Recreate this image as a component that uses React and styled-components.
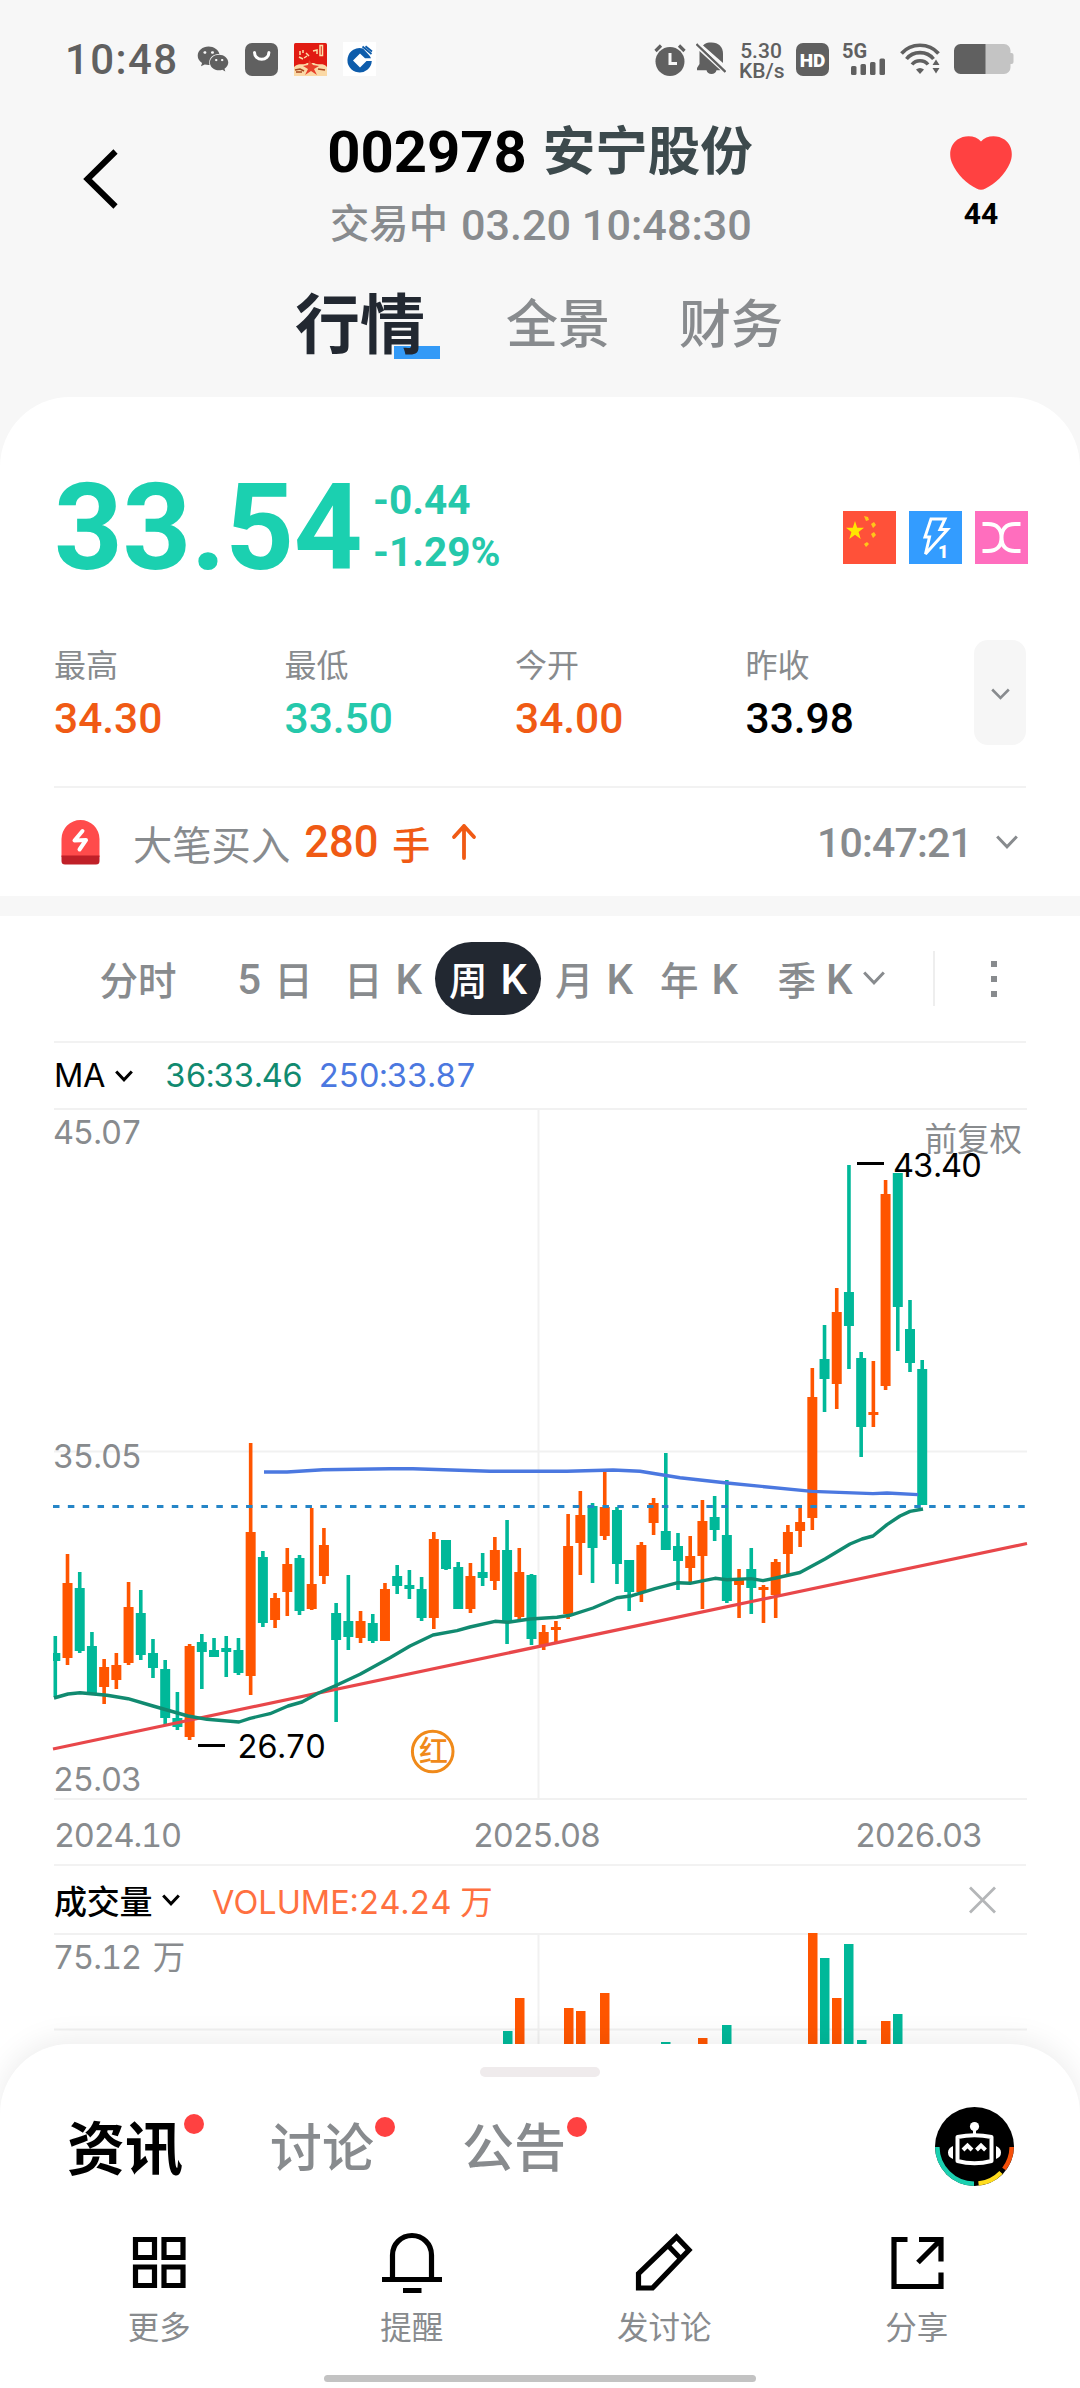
import React from "react";
import styled, { createGlobalStyle } from "styled-components";
import { FaWeixin } from "react-icons/fa";

const UP = "#ff5500";
const DOWN = "#00b899";
const GRAY = "#888b8e";

const GlobalStyle = createGlobalStyle`
  body {
    margin: 0;
    background: #f7f7f7;
    font-family: Roboto, "Noto Sans CJK SC", sans-serif;
  }
  * {
    box-sizing: border-box;
  }
  svg {
    display: block;
    flex: none;
  }
`;

const Page = styled.div`
  position: relative;
  width: 1080px;
  height: 2388px;
  overflow: hidden;
  background: #f7f7f7;
  white-space: nowrap;
`;

/* ---------- status bar ---------- */

const StatusBar = styled.div`
  display: flex;
  align-items: center;
  height: 118px;
  padding: 0 66px 0 65px;
  color: #606060;
`;

const Clock = styled.span`
  width: 132px;
  font-size: 42px;
  font-weight: 500;
  letter-spacing: 1.4px;
`;

const StatusLeft = styled.div`
  display: flex;
  align-items: center;
  gap: 16px;
  flex: 1;
`;

const StatusRight = styled.div`
  display: flex;
  align-items: center;
`;

const NetSpeed = styled.div`
  width: 44px;
  margin: 3px 13px 0;
  font-size: 21px;
  line-height: 20px;
  font-weight: 500;
  text-align: center;
`;

const Gap = styled.div`
  width: ${(p) => p.$w}px;
`;

/* ---------- header ---------- */

const Header = styled.header`
  display: grid;
  grid-template-columns: 200px 1fr 198px;
  height: 139px;
`;

const BackButton = styled.div`
  padding: 31px 0 0 83px;
`;

const Titles = styled.div`
  display: flex;
  flex-direction: column;
  align-items: center;
`;

const Title = styled.h1`
  margin: 1px 0 0 -2px;
  display: flex;
  gap: 16px;
  align-items: center;
  font-size: 58px;
  line-height: 67px;
  font-weight: 700;
  color: #000;
`;

const StockName = styled.span`
  font-size: 52.5px;
  color: #3d4a4d;
`;

const SubTitle = styled.div`
  display: flex;
  gap: 13px;
  margin-top: 6px;
  font-size: 43.2px;
  line-height: 67px;
  font-weight: 500;
  color: ${GRAY};
`;

const Cjk = styled.span`
  font-size: ${(p) => p.$size}px;
  font-weight: ${(p) => p.$weight || "inherit"};
`;

const Favorite = styled.div`
  display: flex;
  flex-direction: column;
  align-items: center;
  padding-top: 18px;
  font-size: 30px;
  line-height: 30px;
  font-weight: 700;
  gap: 9px;
`;

const MainTabs = styled.nav`
  display: flex;
  align-items: center;
  height: 140px;
  padding: 0 0 2px 295px;
`;

const MainTab = styled.span`
  position: relative;
  z-index: 0;
  margin-right: ${(p) => p.$gap || 0}px;
  font-size: ${(p) => (p.$active ? 65 : 52)}px;
  font-weight: ${(p) => (p.$active ? 700 : 500)};
  line-height: 80px;
  color: ${(p) => (p.$active ? "#222831" : GRAY)};
  &::after {
    content: "";
    display: ${(p) => (p.$active ? "block" : "none")};
    position: absolute;
    z-index: -1;
    left: 99px;
    bottom: 7px;
    width: 46px;
    height: 13px;
    background: #339af7;
  }
`;

/* ---------- quote card ---------- */

const Card = styled.main`
  height: 1991px;
  padding-top: 76px;
  background: #fff;
  border-radius: 70px 70px 0 0;
`;

const PriceRow = styled.div`
  display: flex;
  align-items: center;
  height: 110px;
  padding: 0 52px 0 54px;
`;

const Price = styled.div`
  width: 319px;
  font-size: 120px;
  line-height: 110px;
  font-weight: 700;
  letter-spacing: -0.4px;
  color: #1bd0b0;
`;

const Changes = styled.div`
  flex: 1;
  padding-bottom: 4px;
  font-size: 40.5px;
  line-height: 52px;
  font-weight: 700;
  color: #25c8ab;
`;

const Badges = styled.div`
  display: flex;
  gap: 13px;
  padding-top: 19px;
`;

const Stats = styled.div`
  display: grid;
  grid-template-columns: repeat(4, 230.5px) 1fr;
  height: 105px;
  margin: 57px 54px 41px;
`;

const StatLabel = styled.div`
  font-size: 32px;
  line-height: 53px;
  color: ${GRAY};
`;

const StatValue = styled.div`
  font-size: 42.5px;
  line-height: 52px;
  font-weight: 500;
  color: ${(p) => p.$color};
`;

const Expand = styled.div`
  display: flex;
  align-items: center;
  justify-content: center;
  width: 52px;
  height: 105px;
  padding-top: 2px;
  margin-left: -2px;
  background: #f6f6f6;
  border-radius: 14px;
`;

const Divider = styled.div`
  height: 2px;
  margin: 0 54px;
  background: #f2f2f2;
`;

const AlertRow = styled.div`
  display: flex;
  align-items: center;
  height: 108px;
  padding: 0 62px 0 61px;
  font-size: 43.5px;
  color: ${GRAY};
`;

const AlertText = styled.div`
  display: flex;
  align-items: center;
  gap: 14px;
  flex: 1;
  padding-left: 33px;
`;

const AlertAmount = styled.span`
  color: #f05a14;
  font-weight: 500;
`;

const AlertTime = styled.span`
  margin: 2px 24px 0 0;
  font-size: 41px;
  font-weight: 500;
  letter-spacing: -0.8px;
`;

const Band = styled.div`
  height: 20px;
  background: #f7f7f7;
`;

/* ---------- chart ---------- */

const Periods = styled.div`
  display: flex;
  align-items: center;
  height: 125px;
  padding: 0 54px 0 53px;
`;

const Period = styled.div`
  display: flex;
  align-items: center;
  justify-content: center;
  gap: ${(p) => (p.$more ? 10 : 13)}px;
  width: ${(p) => p.$w}px;
  height: 73px;
  margin-left: ${(p) => p.$ml || 0}px;
  padding-bottom: 2px;
  border-radius: 37px;
  font-size: 42px;
  font-weight: 500;
  color: ${(p) => (p.$active ? "#fff" : GRAY)};
  background: ${(p) => (p.$active ? "#222831" : "transparent")};
`;

const PeriodLetter = styled.span`
  padding-top: 4px;
`;

const PeriodSplit = styled.div`
  width: 2px;
  height: 55px;
  margin-left: 22px;
  background: #eee;
`;

const Dots = styled.div`
  display: grid;
  gap: 9px;
  margin-left: 56px;
  span {
    width: 6px;
    height: 6px;
    background: ${GRAY};
  }
`;

const IndicatorRow = styled.div`
  display: flex;
  align-items: center;
  height: ${(p) => p.$h}px;
  margin: 0 54px;
  font-family: Inter, "Noto Sans CJK SC", sans-serif;
  font-size: 32.5px;
  font-variant-numeric: tabular-nums;
  letter-spacing: -0.3px;
  color: #000;
`;

const IndicatorValue = styled.span`
  margin-left: ${(p) => p.$ml}px;
  letter-spacing: ${(p) => p.$ls}px;
  color: ${(p) => p.$color};
`;

const Spacer = styled.div`
  flex: 1;
`;

const ChartBox = styled.div`
  margin: 0 54px;
  svg {
    overflow: visible;
  }
  text {
    font-family: Inter, "Noto Sans CJK SC", sans-serif;
    font-size: 32.5px;
    font-variant-numeric: tabular-nums;
    letter-spacing: -1px;
    word-spacing: 4px;
  }
`;

const Axis = styled.div`
  display: grid;
  grid-template-columns: 419px 382px 1fr;
  height: 64px;
  margin: 0 54px;
  font-family: Inter, sans-serif;
  font-size: 32.5px;
  font-variant-numeric: tabular-nums;
  line-height: 71px;
  letter-spacing: -1.2px;
  color: ${GRAY};
`;

/* ---------- bottom sheet ---------- */

const Sheet = styled.footer`
  position: absolute;
  left: 0;
  bottom: 0;
  width: 1080px;
  height: 344px;
  background: #fff;
  border-radius: 70px 70px 0 0;
  box-shadow: 0 -4px 30px rgba(0, 0, 0, 0.08);
`;

const Handle = styled.div`
  width: 120px;
  height: 10px;
  margin: 23px auto 0;
  border-radius: 5px;
  background: #efebec;
`;

const SheetTabs = styled.div`
  display: flex;
  align-items: center;
  height: 139px;
  padding: 0 66px 0 67px;
`;

const SheetTab = styled.span`
  position: relative;
  margin: 7px ${(p) => p.$gap || 0}px 0 0;
  font-size: ${(p) => (p.$active ? 58 : 52)}px;
  line-height: 72px;
  font-weight: ${(p) => (p.$active ? 700 : 500)};
  color: ${(p) => (p.$active ? "#000" : GRAY)};
  &::after {
    content: "";
    position: absolute;
    top: ${(p) => (p.$active ? 0 : 3)}px;
    right: -21px;
    width: 20px;
    height: 20px;
    border-radius: 50%;
    background: #ff4141;
  }
`;

const Actions = styled.div`
  display: grid;
  grid-template-columns: repeat(4, 252.5px);
  padding: 15px 0 0 33px;
`;

const Action = styled.div`
  display: flex;
  flex-direction: column;
  align-items: center;
  gap: 12px;
  font-size: 31.5px;
  line-height: 44px;
  color: ${GRAY};
`;

const HomeBar = styled.div`
  width: 432px;
  height: 7px;
  margin: 24px auto 0;
  border-radius: 4px;
  background: #c3c3c3;
`;

/* ---------- data ---------- */

// [rising, high, body top, body bottom, low]
const candles = [
  [0, 528, 545, 553, 589], [1, 446, 475, 550, 557], [0, 464, 480, 543, 545],
  [0, 524, 538, 585, 586], [1, 551, 559, 579, 596], [1, 545, 557, 572, 581],
  [1, 474, 499, 555, 557], [0, 482, 505, 547, 552], [0, 531, 545, 560, 570],
  [0, 552, 561, 610, 617], [0, 584, 610, 619, 622], [1, 536, 538, 629, 632],
  [0, 526, 534, 544, 581], [0, 530, 542, 549, 549], [0, 528, 540, 544, 569],
  [0, 530, 542, 565, 567], [1, 335, 424, 568, 587], [0, 443, 449, 515, 519],
  [1, 485, 490, 512, 520], [1, 440, 456, 484, 508], [0, 447, 450, 503, 507],
  [1, 400, 476, 501, 502], [1, 420, 437, 468, 476], [0, 495, 505, 532, 614],
  [0, 467, 513, 529, 542], [1, 503, 513, 530, 535], [0, 506, 515, 533, 535],
  [1, 475, 481, 533, 533], [0, 457, 468, 478, 486], [0, 462, 477, 481, 491],
  [0, 469, 481, 510, 513], [1, 424, 431, 510, 521], [0, 432, 432, 461, 462],
  [0, 454, 459, 501, 501], [1, 455, 468, 501, 505], [0, 445, 464, 470, 478],
  [1, 429, 442, 473, 482], [0, 412, 442, 514, 536], [1, 440, 464, 509, 512],
  [0, 466, 467, 531, 537], [1, 517, 524, 537, 542], [1, 513, 519, 522, 534],
  [1, 406, 438, 506, 511], [1, 383, 407, 435, 467], [0, 395, 398, 440, 475],
  [1, 364, 399, 428, 432], [0, 399, 402, 456, 476], [0, 452, 452, 484, 503],
  [1, 434, 437, 484, 494], [1, 390, 395, 415, 427], [0, 345, 423, 442, 442],
  [0, 425, 438, 453, 482], [1, 428, 448, 460, 474], [1, 392, 413, 448, 501],
  [0, 388, 409, 422, 433], [0, 372, 427, 493, 495], [1, 461, 472, 477, 510],
  [0, 440, 461, 480, 506], [1, 477, 479, 482, 515], [1, 451, 454, 487, 510],
  [1, 417, 424, 446, 467], [1, 399, 414, 423, 439], [1, 260, 289, 410, 422],
  [0, 217, 251, 271, 304], [1, 180, 204, 276, 301], [0, 57, 184, 218, 261],
  [0, 244, 250, 319, 349], [1, 253, 304, 307, 319], [1, 72, 86, 278, 282],
  [0, 65, 65, 199, 243], [0, 192, 221, 255, 264], [0, 252, 261, 397, 397],
];

const ma36 =
  "0,590 14,586 26,584.7 53,587.3 74,590.7 99,598 134,608 153,611.3 185,614 196,610.3 216,605.7 234,598 248,594 264,585.3 283,577 306,566.3 336,549.7 356,538 379,527 403,522.7 416,519 441,513.3 454,514.3 476,511 503,509.3 516,507.3 539,500 563,489.7 578,487.7 601,480.7 624,474.7 636,475.3 661,470.3 673,471.7 697,470.6 709,472.7 722,470 746,464.5 771,451 796,436 808,431 819,428 833,416.6 846,408 856,403.4 869,401";
const ma250 =
  "210,364 233,364 269,361.7 336,360.7 359,360.7 436,363.2 513,363.2 559,362 586,363.3 626,369.7 673,375 758,383.4 819,385.6 833,385 864,386.6";

// [x, top, rising]
const volumes = [
  [449, 98, 0], [461, 65, 1], [510, 75, 1], [522, 78, 1], [546, 60, 1],
  [607, 109, 0], [644, 105, 1], [668, 92, 0], [754, 0, 1], [766, 25, 0],
  [778, 65, 1], [790, 11, 0], [803, 107, 0], [827, 88, 1], [839, 81, 0],
];

const stats = [
  ["最高", "34.30", "#f05a14"],
  ["最低", "33.50", "#25c8ab"],
  ["今开", "34.00", "#f05a14"],
  ["昨收", "33.98", "#000"],
];

/* ---------- icons ---------- */

const Chevron = ({ w, h, color, stroke = 3 }) => (
  <svg width={w} height={h} viewBox={`0 0 ${w} ${h}`} fill="none" stroke={color} strokeWidth={stroke}>
    <path d={`M1.2 1.5 L${w / 2} ${h - 2.2} L${w - 1.2} 1.5`} />
  </svg>
);

const BagIcon = () => (
  <svg width="33" height="33" viewBox="0 0 33 33">
    <rect width="33" height="33" rx="7" fill="#606060" />
    <path d="M9.500 9.500 a7.200 6.800 0 0 0 14.400 0" fill="none" stroke="#fff" strokeWidth="3" strokeLinecap="round" />
  </svg>
);

const RedAppIcon = () => (
  <svg width="33" height="33" viewBox="0 0 33 33">
    <rect width="33" height="33" rx="1.500" fill="#e11b12" />
    <path d="M0 24 C5 19 9 23 13 20 L20 20 C25 23 29 19 33 24 V33 H0Z" fill="#fbd9a6" />
    <path d="M26 2.500 h2.500 v10 h-2.500z M19 8 l4-1 v4 M12 10 l3 3 M5 14 l4 2 M10 15 l3-2 M6 8v4 M9 7v3" fill="none" stroke="#fde0a8" strokeWidth="1.500" />
    <path d="M15 17 l4 5 6 1 -5 3 3 6 -6-4 -6 4 3-6 -5-3 5-1z" fill="#e8402a" />
    <path d="M1 27 l5-1 4 2 M24 26 l7 1 M2 29h6" stroke="#a8471e" strokeWidth="1.600" fill="none" />
  </svg>
);

const BankIcon = () => (
  <svg width="33" height="34" viewBox="0 0 33 34">
    <rect width="33" height="34" fill="#fff" />
    <path d="M20 6.500 A12.200 12.200 0 1 0 28.800 19 H23.500 L17 25.500 L10 18.500 L17 11.500 L22 16.200 H28 A12 12 0 0 0 26 13Z" fill="#0d5cab" />
    <path d="M19.500 4.500 L28.500 12 M22.500 4.300 L29 9.500" stroke="#0d5cab" strokeWidth="1.800" />
  </svg>
);

const AlarmIcon = () => (
  <svg width="32" height="33" viewBox="0 0 32 33">
    <circle cx="16" cy="18.500" r="14.500" fill="#606060" />
    <path d="M1.500 8 L7 2.500 M30.500 8 L25 2.500" stroke="#606060" strokeWidth="3.200" />
    <path d="M16 10 V20.500 H23" fill="none" stroke="#f7f7f7" strokeWidth="3" />
  </svg>
);

const MuteIcon = () => (
  <svg width="30" height="34" viewBox="0 0 30 34">
    <path d="M7 3.500 C9 1 12 0.500 15.500 0.500 C22.500 0.500 27 5 27 11.500 V21 L7 3.500Z" fill="#606060" />
    <path d="M3.500 9 L24.500 28.300 H20.500 A5.200 5.200 0 0 1 10.500 28.300 H1 V26 L3.500 22Z" fill="#606060" />
    <path d="M0.500 2 L29.500 30" stroke="#606060" strokeWidth="2.400" />
    <path d="M3 1.500 L30 26.500" stroke="#f7f7f7" strokeWidth="2" />
  </svg>
);

const HdIcon = () => (
  <svg width="33" height="33" viewBox="0 0 33 33">
    <rect width="33" height="33" rx="7" fill="#606060" />
    <text x="16.500" y="23.500" textAnchor="middle" fontSize="19" fontWeight="900" fill="#fff">HD</text>
  </svg>
);

const SignalIcon = () => (
  <svg width="46" height="40" viewBox="0 -5 46 40" fill="#606060">
    <text x="1" y="14" fontSize="20" fontWeight="700">5G</text>
    <rect x="10" y="22" width="5.500" height="9" rx="1.500" />
    <rect x="19.500" y="20" width="5.500" height="11" rx="1.500" />
    <rect x="29" y="18" width="5.500" height="13" rx="1.500" />
    <rect x="38.500" y="14.500" width="5.500" height="16.500" rx="1.500" />
  </svg>
);

const WifiIcon = () => (
  <svg width="41" height="32" viewBox="0 0 41 32">
    <g fill="none" stroke="#606060" strokeWidth="3.600">
      <path d="M1.500 10.500 C11 -0.500 29 -0.500 38.500 10.500" />
      <path d="M6.500 16 C13 7.500 27 7.500 33.500 16" />
      <path d="M12 21.500 C16 16.500 24 16.500 28 21.500" />
    </g>
    <path d="M16 26.500 C18.500 24.500 21.500 24.500 24 26.500 L20 31Z" fill="#606060" />
    <path d="M32.500 22 L36 16.500 L39.500 22Z M32.500 25 L36 30.500 L39.500 25Z" fill="#606060" />
  </svg>
);

const BatteryIcon = () => (
  <svg width="60" height="30" viewBox="0 0 60 30">
    <path d="M6 0 H50 a6.500 6.500 0 0 1 6.500 6.500 V9 h1 a2 2 0 0 1 2 2 V18 a2 2 0 0 1 -2 2 h-1 V23.500 A6.500 6.500 0 0 1 50 30 H6Z" fill="#c4c4c4" />
    <path d="M31.500 0 V30 H6.500 A6.500 6.500 0 0 1 0 23.500 V6.500 A6.500 6.500 0 0 1 6.500 0Z" fill="#606060" />
  </svg>
);

const HeartIcon = () => (
  <svg width="62" height="54" viewBox="0 0 62 54">
    <path d="M31 5.500 C26 -1 14.500 -1.500 7.500 3.500 C0 9 -1.500 18.500 2 27 C7 38.500 17 48 26.500 52.500 Q31 55 35.500 52.500 C45 48 55 38.500 60 27 C63.500 18.500 62 9 54.500 3.500 C47.500 -1.500 36 -1 31 5.500Z" fill="#ff4141" />
  </svg>
);

const FlagIcon = () => (
  <svg width="53" height="53" viewBox="0 0 53 53">
    <rect width="53" height="53" fill="#ff5139" />
    <path d="M12 10 L14.200 16.800 H21 L15.600 21 L17.700 28 L12 23.700 L6.300 28 L8.400 21 L3 16.800 H9.800Z" fill="#ffe600" />
    <g fill="#ffc61a">
      <path d="M21 5 l4 1 1 3 -3 1z M28 13 l3-2 2 3 -3 3z M28 23 l3-2 2 3 -3 3z M21 33 l3-2 2 2 -3 3z" />
    </g>
  </svg>
);

const FlashIcon = () => (
  <svg width="53" height="53" viewBox="0 0 53 53">
    <rect width="53" height="53" fill="#339cff" />
    <path d="M22 8 H36 L31 18.500 H38.500 L16.500 43 L20.500 26 H16 Z" fill="none" stroke="#fff" strokeWidth="3" />
    <text x="29" y="46.500" fontSize="18" fontWeight="900" fill="#fff">1</text>
  </svg>
);

const LinkIcon = () => (
  <svg width="53" height="53" viewBox="0 0 53 53">
    <rect width="53" height="53" fill="#ff6ebe" />
    <path d="M7.500 13 H13 C22 13 26.500 18 26.500 26.500 C26.500 35 22 40 13 40 H7.500 M45.500 13 H40 C31 13 26.500 18 26.500 26.500 C26.500 35 31 40 40 40 H45.500" fill="none" stroke="#fff" strokeWidth="4" />
  </svg>
);

const SirenIcon = () => (
  <svg width="39" height="45" viewBox="0 0 39 45">
    <path d="M0.500 37 V19 a19 19 0 0 1 38 0 V37Z" fill="#ff4b4b" />
    <path d="M0.500 35.500 H38.500 V41 a3.500 3.500 0 0 1 -3.500 3.500 H4 a3.500 3.500 0 0 1 -3.500 -3.500Z" fill="#c02028" />
    <path d="M21.500 11 L13.500 20.500 L25 20 L18.500 29.500" fill="none" stroke="#fff" strokeWidth="4" strokeLinecap="round" strokeLinejoin="round" />
  </svg>
);

const ArrowUp = () => (
  <svg width="33" height="38" viewBox="-7 0 33 38" fill="none" stroke="#f05a14" strokeWidth="3.800" strokeLinecap="round" strokeLinejoin="round">
    <path d="M13 35 V3 M3 14 L13 3 L23 14" />
  </svg>
);

const RobotIcon = () => (
  <svg width="79" height="79" viewBox="0 0 79 79">
    <circle cx="39.500" cy="39.500" r="39.500" fill="#000" />
    <g fill="none" strokeWidth="4.500">
      <path d="M2.300 40 A37.200 37.200 0 0 0 39 76.700" stroke="#1bd0b0" />
      <path d="M43.500 76.600 A37.200 37.200 0 0 0 66 65.500" stroke="#ffdc1e" />
      <path d="M69 62 A37.200 37.200 0 0 0 76.700 40" stroke="#f4500a" />
    </g>
    <circle cx="39.500" cy="19.500" r="4.600" fill="#fff" />
    <g fill="none" stroke="#fff" strokeWidth="4">
      <path d="M39.500 22 V29" strokeWidth="3" />
      <path d="M22.500 30 Q39.500 26.500 56.500 30 V54 Q39.500 58.500 22.500 54Z" strokeLinejoin="round" />
      <path d="M28 43 L32.500 38.500 L37 43 M41.500 43 L46 38.500 L50.500 43" />
    </g>
    <path d="M18 39 V52 Q13 50 13 45.500 Q13 41 18 39Z M61 39 V52 Q66 50 66 45.500 Q66 41 61 39Z" fill="#fff" />
  </svg>
);

const GridIcon = () => (
  <svg width="64" height="64" viewBox="0 0 64 64" fill="none" stroke="#000" strokeWidth="5.200">
    <path d="M8.500 8.500 H27.500 V26.500 H8.500Z M37 8.500 H56 V26.500 H37Z M8.500 36 H27.500 V54.500 H8.500Z M37 36 H56 V54.500 H37Z" />
  </svg>
);

const BellIcon = () => (
  <svg width="64" height="64" viewBox="0 0 64 64" fill="none" stroke="#000" strokeWidth="5.200">
    <path d="M12.500 48 V24 a19.500 19.500 0 0 1 39 0 V48 M2 48.500 H62 M23 59.500 H41.500" />
  </svg>
);

const PencilIcon = () => (
  <svg width="64" height="64" viewBox="0 0 64 64" fill="none" stroke="#000" strokeWidth="5.200">
    <path d="M6.500 57 V42.500 L44.500 6 L57 19 L20.500 57Z M36 14.500 L48.500 27.500" />
  </svg>
);

const ShareIcon = () => (
  <svg width="64" height="64" viewBox="0 0 64 64" fill="none" stroke="#000" strokeWidth="5.200">
    <path d="M22.500 8.500 H9 V55.500 H56 V41.500 M34 8.500 H56 V30.500 M55 9.500 L33 31.500" />
  </svg>
);

const actions = [
  ["更多", GridIcon],
  ["提醒", BellIcon],
  ["发讨论", PencilIcon],
  ["分享", ShareIcon],
];

const periods = [
  { cjk: "分时", w: 170 },
  { num: "5", cjk: "日", w: 104 },
  { cjk: "日", k: true, w: 104, ml: 4 },
  { cjk: "周", k: true, w: 106, active: true },
  { cjk: "月", k: true, w: 106 },
  { cjk: "年", k: true, w: 104 },
  { cjk: "季", k: true, w: 160, more: true },
];

const KChart = () => (
  <svg width="973" height="692" viewBox="0 0 973 692">
    <path d="M0 1 H973 M0 343.500 H973 M0 691 H973 M484.500 1 V691" stroke="#f1f1f1" strokeWidth="2" fill="none" />
    <g fill={GRAY}>
      <text x="-1" y="36">45.07</text>
      <text x="-1" y="360">35.05</text>
      <text x="-1" y="683">25.03</text>
      <text x="968" y="43" textAnchor="end" style={{ letterSpacing: 0 }}>前复权</text>
    </g>
    {candles.map(([up, hi, top, bot, lo], i) => {
      const x = 1.3 + i * 12.21;
      const left = Math.max(x - 5, -1);
      return (
        <g key={i} fill={up ? UP : DOWN}>
          <rect x={x - 1.8} y={hi} width="3.600" height={lo - hi} />
          <rect x={left} y={top} width={x + 5 - left} height={bot - top} />
        </g>
      );
    })}
    <path d="M-1 398.500 H973" stroke="#2585c7" strokeWidth="3" strokeDasharray="6.500 8.350" />
    <path d="M-1 641 L973 435.500" stroke="#e8474a" strokeWidth="3.200" />
    <g fill="none" strokeWidth="3.400" strokeLinejoin="round">
      <polyline points={ma36} stroke="#118a70" />
      <polyline points={ma250} stroke="#4b78e0" />
    </g>
    <path d="M803 55.500 H830 M144 637.500 H171" stroke="#000" strokeWidth="3" />
    <text x="839" y="69">43.40</text>
    <text x="183" y="650">26.70</text>
    <circle cx="378.700" cy="643.500" r="20.300" fill="none" stroke="#f08a1a" strokeWidth="3" />
    <text x="379" y="654" textAnchor="middle" fill="#f08a1a" style={{ fontSize: 29, fontWeight: 500 }}>红</text>
  </svg>
);

const VolumeChart = () => (
  <svg width="973" height="130" viewBox="0 0 973 130">
    <path d="M0 1 H973 M0 96.500 H973 M484.500 1 V130" stroke="#f1f1f1" strokeWidth="2" fill="none" />
    <text x="-1" y="36" fill={GRAY}>75.12 万</text>
    {volumes.map(([x, top, up]) => (
      <rect key={x} x={x} y={top} width="9.500" height={130 - top} fill={up ? UP : DOWN} />
    ))}
  </svg>
);

const App = () => {
  return (
    <Page>
      <GlobalStyle />
      <StatusBar>
        <Clock>10:48</Clock>
        <StatusLeft>
          <FaWeixin size={32} />
          <BagIcon />
          <RedAppIcon />
          <BankIcon />
        </StatusLeft>
        <StatusRight>
          <AlarmIcon />
          <Gap $w={10} />
          <MuteIcon />
          <NetSpeed>
            <div>5.30</div>
            <div>KB/s</div>
          </NetSpeed>
          <HdIcon />
          <Gap $w={12} />
          <SignalIcon />
          <Gap $w={13} />
          <WifiIcon />
          <Gap $w={13} />
          <BatteryIcon />
        </StatusRight>
      </StatusBar>

      <Header>
        <BackButton>
          <svg width="36" height="60" viewBox="0 0 36 60" fill="none" stroke="#000" strokeWidth="6">
            <path d="M32.500 2.500 L4.500 30 L32.500 57.500" />
          </svg>
        </BackButton>
        <Titles>
          <Title>
            002978 <StockName>安宁股份</StockName>
          </Title>
          <SubTitle>
            <Cjk $size={39.3}>交易中</Cjk>
            <span>03.20 10:48:30</span>
          </SubTitle>
        </Titles>
        <Favorite>
          <HeartIcon />
          44
        </Favorite>
      </Header>

      <MainTabs>
        <MainTab $active $gap={81}>行情</MainTab>
        <MainTab $gap={69}>全景</MainTab>
        <MainTab>财务</MainTab>
      </MainTabs>

      <Card>
        <PriceRow>
          <Price>33.54</Price>
          <Changes>
            <div>-0.44</div>
            <div>-1.29%</div>
          </Changes>
          <Badges>
            <FlagIcon />
            <FlashIcon />
            <LinkIcon />
          </Badges>
        </PriceRow>

        <Stats>
          {stats.map(([label, value, color]) => (
            <div key={label}>
              <StatLabel>{label}</StatLabel>
              <StatValue $color={color}>{value}</StatValue>
            </div>
          ))}
          <Expand>
            <Chevron w={19} h={12} color={GRAY} stroke={2.6} />
          </Expand>
        </Stats>
        <Divider />

        <AlertRow>
          <SirenIcon />
          <AlertText>
            <Cjk $size={39.3}>大笔买入</Cjk>
            <AlertAmount>280</AlertAmount>
            <AlertAmount>
              <Cjk $size={38}>手</Cjk>
            </AlertAmount>
            <ArrowUp />
          </AlertText>
          <AlertTime>10:47:21</AlertTime>
          <Chevron w={22} h={14} color={GRAY} />
        </AlertRow>
        <Band />

        <Periods>
          {periods.map((p) => (
            <Period key={p.cjk + p.w} $w={p.w} $ml={p.ml} $active={p.active} $more={p.more}>
              {p.num && <PeriodLetter>{p.num}</PeriodLetter>}
              <Cjk $size={38.5}>{p.cjk}</Cjk>
              {p.k && <PeriodLetter>K</PeriodLetter>}
              {p.more && <Chevron w={22} h={14} color={GRAY} />}
            </Period>
          ))}
          <PeriodSplit />
          <Dots>
            <span />
            <span />
            <span />
          </Dots>
        </Periods>
        <Divider />

        <IndicatorRow $h={65}>
          <span>MA</span>
          <Gap $w={10} />
          <Chevron w={18} h={12} color="#000" />
          <IndicatorValue $ml={32} $ls={-0.85} $color="#118a70">36:33.46</IndicatorValue>
          <IndicatorValue $ml={16} $ls={-0.85} $color="#4b78e0">250:33.87</IndicatorValue>
        </IndicatorRow>

        <ChartBox>
          <KChart />
        </ChartBox>
        <Axis>
          <span>2024.10</span>
          <span>2025.08</span>
          <span>2026.03</span>
        </Axis>
        <Divider />

        <IndicatorRow $h={67}>
          <Cjk $size={33} $weight={500}>成交量</Cjk>
          <Gap $w={10} />
          <Chevron w={18} h={12} color="#000" />
          <IndicatorValue $ml={32} $ls={0} $color="#ff7040">VOLUME:24.24 万</IndicatorValue>
          <Spacer />
          <svg width="58" height="28" viewBox="0 0 58 28" stroke="#b4b6b8" strokeWidth="2.800">
            <path d="M2 1.500 L27 26.500 M27 1.500 L2 26.500" />
          </svg>
        </IndicatorRow>
        <ChartBox>
          <VolumeChart />
        </ChartBox>
      </Card>

      <Sheet>
        <Handle />
        <SheetTabs>
          <SheetTab $active $gap={87}>资讯</SheetTab>
          <SheetTab $gap={88}>讨论</SheetTab>
          <SheetTab>公告</SheetTab>
          <Spacer />
          <RobotIcon />
        </SheetTabs>
        <Actions>
          {actions.map(([label, Icon]) => (
            <Action key={label}>
              <Icon />
              {label}
            </Action>
          ))}
        </Actions>
        <HomeBar />
      </Sheet>
    </Page>
  );
};

export default App;
